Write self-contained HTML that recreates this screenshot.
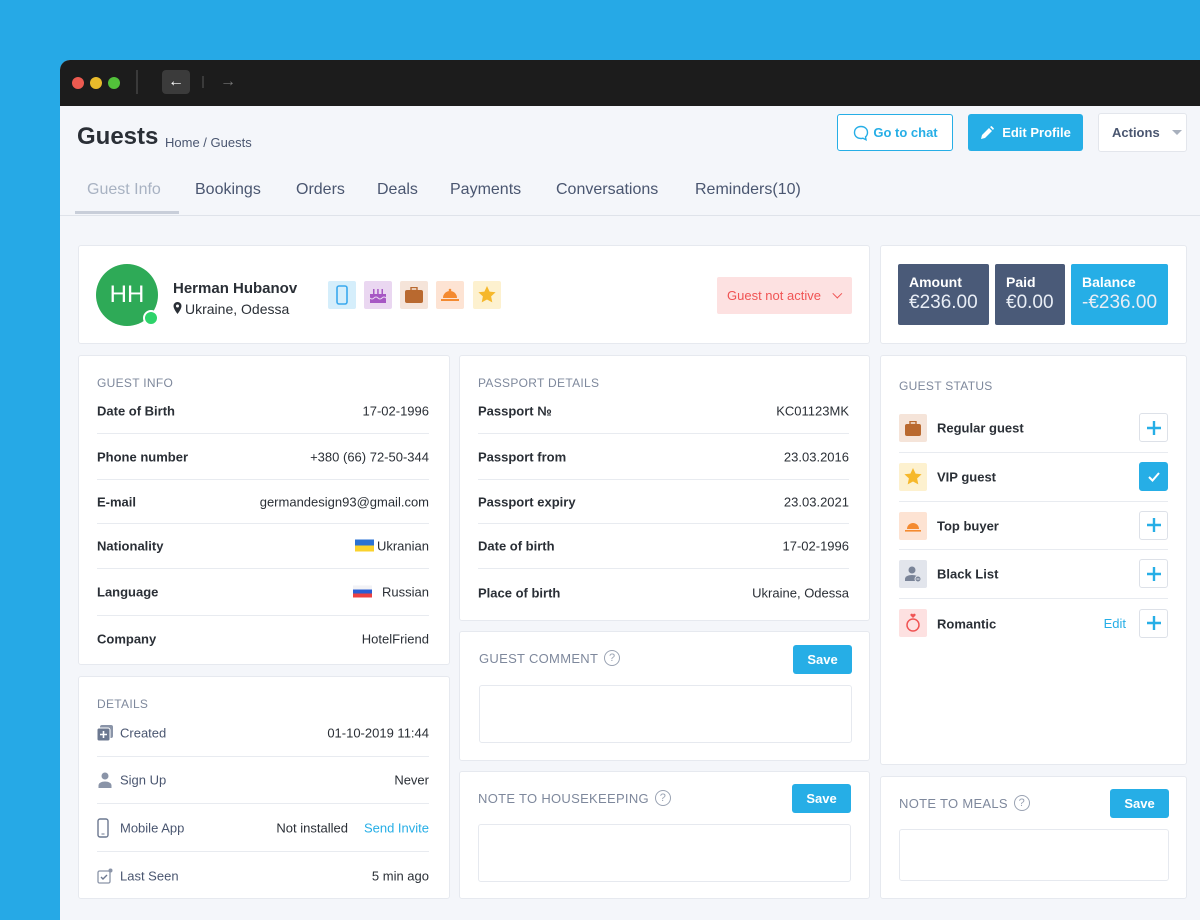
<!DOCTYPE html>
<html><head><meta charset="utf-8"><style>
*{box-sizing:border-box;margin:0;padding:0}
body{width:1200px;height:902px;overflow:hidden;background:#26a9e6;font-family:"Liberation Sans",sans-serif;color:#2a2f36;position:relative}
.a{position:absolute}
.win{left:60px;top:60px;width:1160px;height:860px;background:#f4f6fa;border-radius:10px 0 0 0;overflow:hidden}
.bar{left:0;top:0;width:1160px;height:46px;background:#1c1c1c}
.card{position:absolute;background:#fff;border:1px solid #e6e9ef;border-radius:3px}
.h{position:absolute;font-size:12px;color:#7e889c;letter-spacing:.3px;display:flex;align-items:center}
.row{position:absolute;left:18px;right:20px;height:46px;border-bottom:1px solid #e8ebf0;font-size:13px}
.row .l{position:absolute;left:0;top:50%;transform:translateY(-50%);font-weight:bold;color:#2a2f36}
.row .r{position:absolute;right:0;top:50%;transform:translateY(-50%);color:#2a2f36}
.btn{position:absolute;border-radius:3px;font-size:13px;font-weight:bold;display:flex;align-items:center;justify-content:center}
.save{position:absolute;width:59px;height:29px;background:#26aee6;color:#fff;font-size:13px;font-weight:bold;border-radius:3px;display:flex;align-items:center;justify-content:center}
.ta{position:absolute;border:1px solid #e6e9ef;border-radius:3px}
.q{display:inline-block;width:16px;height:16px;border:1px solid #9aa3b3;border-radius:50%;font-size:11px;text-align:center;line-height:14px;color:#9aa3b3;margin-left:6px}
.ic{position:absolute;width:28px;height:28px;border-radius:2px;display:flex;align-items:center;justify-content:center}
.st{position:absolute;left:18px;right:18px;height:49px;border-bottom:1px solid #e8ebf0}
.st .n{position:absolute;left:38px;top:50%;transform:translateY(-50%);font-size:13px;font-weight:bold}
.pl{position:absolute;right:0;top:50%;margin-top:-15px;width:29px;height:29px;border:1px solid #dde1e8;border-radius:3px;display:flex;align-items:center;justify-content:center}
.dl{position:absolute;left:18px;right:20px;height:47px;border-bottom:1px solid #e8ebf0;font-size:13px}
.dl .l{position:absolute;left:23px;top:50%;transform:translateY(-50%);color:#4a5670}
.dl .r{position:absolute;right:0;top:50%;transform:translateY(-50%)}
.dl svg{position:absolute;left:0;top:50%;transform:translateY(-50%)}
.tab{position:absolute;top:181px;font-size:16px;color:#4a5670}
.mb{position:absolute;top:264px;height:61px;color:#fff;padding:10px 0 0 11px;border-radius:2px}
.mb b{display:block;font-size:14px;font-weight:bold}
.mb span{display:block;font-size:19px;margin-top:2px;color:#e8edf5}
</style></head><body>
<div class="a win">
 <div class="a bar">
  <div class="a" style="left:12px;top:17px;width:12px;height:12px;border-radius:50%;background:#ec5a50"></div>
  <div class="a" style="left:30px;top:17px;width:12px;height:12px;border-radius:50%;background:#e9bb2b"></div>
  <div class="a" style="left:48px;top:17px;width:12px;height:12px;border-radius:50%;background:#52c13a"></div>
  <div class="a" style="left:76px;top:10px;width:2px;height:24px;background:#3a3a3a"></div>
  <div class="a" style="left:102px;top:10px;width:28px;height:24px;border-radius:4px;background:#3b3b3b;color:#fff;font-size:16px;text-align:center;line-height:23px;font-weight:bold">&#8592;</div>
  <div class="a" style="left:142px;top:16px;width:2px;height:12px;background:#3a3a3a"></div>
  <div class="a" style="left:160px;top:10px;color:#777;font-size:16px;line-height:23px;font-weight:bold">&#8594;</div>
 </div>
</div>
<div class="a" style="left:77px;top:123px;font-size:24px;font-weight:bold;color:#2a2f36">Guests</div>
<div class="a" style="left:165px;top:135px;font-size:13px;color:#4a5670">Home / Guests</div>
<div class="btn" style="left:837px;top:114px;width:116px;height:37px;border:1px solid #26aee6;color:#26aee6;background:#fff"><svg width="18" height="18" viewBox="0 0 18 18" style="margin-right:3px"><path d="M9 2.5c-4 0-6.5 2.6-6.5 6s2.5 6 6.5 6c.8 0 1.4-.1 2-.3l3 1.5-.5-2.8c1.3-1.1 2-2.7 2-4.4 0-3.4-2.5-6-6.5-6z" fill="none" stroke="#26aee6" stroke-width="1.4"/></svg>Go to chat</div>
<div class="btn" style="left:968px;top:114px;width:115px;height:37px;background:#26aee6;color:#fff"><svg width="14" height="14" viewBox="0 0 14 14" style="margin-right:8px"><path d="M1 13l1-4 7-7 3 3-7 7z M10 1l1.5-1 2.5 2.5-1 1.5z" fill="#fff"/></svg>Edit Profile</div>
<div class="btn" style="left:1098px;top:113px;width:89px;height:39px;background:#fff;border:1px solid #e3e6ec;color:#4a5670;justify-content:flex-start;padding-left:13px">Actions<span style="margin-left:12px;width:0;height:0;border-left:5px solid transparent;border-right:5px solid transparent;border-top:5px solid #a8b0bd"></span></div>
<div class="tab" style="left:87px;color:#a8b2c2">Guest Info</div>
<div class="a" style="left:75px;top:211px;width:104px;height:3px;background:#c8ced9"></div>
<div class="tab" style="left:195px">Bookings</div>
<div class="tab" style="left:296px">Orders</div>
<div class="tab" style="left:377px">Deals</div>
<div class="tab" style="left:450px">Payments</div>
<div class="tab" style="left:556px">Conversations</div>
<div class="tab" style="left:695px">Reminders(10)</div>
<div class="a" style="left:60px;top:215px;width:1140px;height:1px;background:#dfe3ea"></div>

<div class="card" style="left:78px;top:245px;width:792px;height:99px">
 <div class="a" style="left:17px;top:18px;width:62px;height:62px;border-radius:50%;background:#2eaa57;color:#fff;font-size:24px;text-align:center;line-height:62px">HH</div>
 <div class="a" style="left:64px;top:64px;width:16px;height:16px;border-radius:50%;background:#2ed36a;border:2px solid #fff"></div>
 <div class="a" style="left:94px;top:34px;font-size:15px;font-weight:bold;color:#2a2f36">Herman Hubanov</div>
 <div class="a" style="left:94px;top:55px;font-size:14px;color:#2a2f36"><svg width="9" height="12" viewBox="0 0 9 12" style="margin-right:3px"><path d="M4.5 0a4 4 0 0 0-4 4c0 3 4 8 4 8s4-5 4-8a4 4 0 0 0-4-4zm0 5.5a1.5 1.5 0 1 1 0-3 1.5 1.5 0 0 1 0 3z" fill="#2a2f36"/></svg>Ukraine, Odessa</div>
 <div class="ic" style="left:249px;top:35px;background:#d5eefb"><svg width="12" height="20"><rect x="1" y="1" width="10" height="18" rx="2" fill="none" stroke="#3aa9ee" stroke-width="1.6"/></svg></div>
 <div class="ic" style="left:285px;top:35px;background:#ead7f1"><svg width="20" height="18"><rect x="2" y="8" width="16" height="9" fill="#a657c4"/><rect x="5" y="3" width="1.5" height="5" fill="#a657c4"/><rect x="9.2" y="3" width="1.5" height="5" fill="#a657c4"/><rect x="13.5" y="3" width="1.5" height="5" fill="#a657c4"/><path d="M2 12q2 2 4 0t4 0 4 0 4 0" stroke="#ead7f1" fill="none"/></svg></div>
 <div class="ic" style="left:321px;top:35px;background:#f5e4d9"><svg width="20" height="16"><rect x="1" y="3" width="18" height="13" rx="2" fill="#b9692f"/><rect x="7" y="0.5" width="6" height="3" fill="none" stroke="#b9692f" stroke-width="1.4"/></svg></div>
 <div class="ic" style="left:357px;top:35px;background:#fde3d3"><svg width="20" height="16"><path d="M3 11a7 7 0 0 1 14 0z" fill="#f48a30"/><rect x="1" y="12" width="18" height="2" fill="#f48a30"/><circle cx="10" cy="3" r="1.3" fill="#f48a30"/></svg></div>
 <div class="ic" style="left:394px;top:35px;background:#fdf1cf"><svg width="20" height="20" viewBox="0 0 20 20"><path d="M10 1l2.6 5.6 6 .7-4.5 4.1 1.2 6L10 14.5l-5.3 2.9 1.2-6L1.4 7.3l6-.7z" fill="#f6b82b"/></svg></div>
 <div class="a" style="left:638px;top:31px;width:135px;height:37px;background:#fde1e1;border-radius:2px;color:#f05454;font-size:13px;padding:11px 0 0 10px">Guest not active <span style="margin-left:6px;display:inline-block;width:7px;height:7px;border-right:1.5px solid #f05454;border-bottom:1.5px solid #f05454;transform:rotate(45deg) translateY(-4px)"></span></div>
</div>
<div class="card" style="left:880px;top:245px;width:307px;height:99px"></div>
<div class="mb" style="left:898px;width:91px;background:#4a5a78"><b>Amount</b><span>€236.00</span></div>
<div class="mb" style="left:995px;width:70px;background:#4a5a78"><b>Paid</b><span>€0.00</span></div>
<div class="mb" style="left:1071px;width:97px;background:#26aee6"><b>Balance</b><span>-€236.00</span></div>

<div class="card" style="left:78px;top:355px;width:372px;height:310px">
 <div class="h" style="left:18px;top:20px">GUEST INFO</div>
 <div class="row" style="top:33px;height:45px"><span class="l">Date of Birth</span><span class="r">17-02-1996</span></div>
 <div class="row" style="top:78px"><span class="l">Phone number</span><span class="r">+380 (66) 72-50-344</span></div>
 <div class="row" style="top:124px;height:44px"><span class="l">E-mail</span><span class="r">germandesign93@gmail.com</span></div>
 <div class="row" style="top:168px;height:45px"><span class="l">Nationality</span><span class="r"><span style="display:inline-block;width:19px;height:12px;background:linear-gradient(#2a72d4 50%,#fad22d 50%);vertical-align:-1px;margin-right:3px"></span>Ukranian</span></div>
 <div class="row" style="top:213px;height:47px"><span class="l">Language</span><span class="r"><span style="display:inline-block;width:19px;height:12px;background:linear-gradient(#f2f2f5 33%,#2a5ed4 33%,#2a5ed4 66%,#ec4141 66%);vertical-align:-1px;margin-right:10px"></span>Russian</span></div>
 <div class="row" style="top:260px;border:0"><span class="l">Company</span><span class="r">HotelFriend</span></div>
</div>

<div class="card" style="left:459px;top:355px;width:411px;height:266px">
 <div class="h" style="left:18px;top:20px">PASSPORT DETAILS</div>
 <div class="row" style="top:33px;height:45px"><span class="l">Passport №</span><span class="r">KC01123MK</span></div>
 <div class="row" style="top:78px"><span class="l">Passport from</span><span class="r">23.03.2016</span></div>
 <div class="row" style="top:124px;height:44px"><span class="l">Passport expiry</span><span class="r">23.03.2021</span></div>
 <div class="row" style="top:168px;height:45px"><span class="l">Date of birth</span><span class="r">17-02-1996</span></div>
 <div class="row" style="top:213px;height:47px;border:0"><span class="l">Place of birth</span><span class="r">Ukraine, Odessa</span></div>
</div>

<div class="card" style="left:459px;top:631px;width:411px;height:130px">
 <div class="h" style="left:19px;top:18px;font-size:13px">GUEST COMMENT<span class="q">?</span></div>
 <div class="save" style="left:333px;top:13px">Save</div>
 <div class="ta" style="left:19px;top:53px;width:373px;height:58px"></div>
</div>
<div class="card" style="left:459px;top:771px;width:411px;height:128px">
 <div class="h" style="left:18px;top:18px;font-size:13px">NOTE TO HOUSEKEEPING<span class="q">?</span></div>
 <div class="save" style="left:332px;top:12px">Save</div>
 <div class="ta" style="left:18px;top:52px;width:373px;height:58px"></div>
</div>

<div class="card" style="left:78px;top:676px;width:372px;height:223px">
 <div class="h" style="left:18px;top:20px">DETAILS</div>
 <div class="dl" style="top:33px"><svg width="16" height="16"><rect x="3" y="0" width="13" height="13" rx="2" fill="#8a94a8"/><rect x="0" y="3" width="13" height="13" rx="2" fill="#6c7890" stroke="#fff"/><path d="M6.5 6v7M3 9.5h7" stroke="#fff" stroke-width="1.6"/></svg><span class="l">Created</span><span class="r">01-10-2019 11:44</span></div>
 <div class="dl" style="top:80px"><svg width="16" height="16"><circle cx="8" cy="4" r="3.5" fill="#8a94a8"/><path d="M1.5 16v-2.5c0-2.5 3-4 6.5-4s6.5 1.5 6.5 4V16z" fill="#8a94a8"/></svg><span class="l">Sign Up</span><span class="r">Never</span></div>
 <div class="dl" style="top:127px;height:48px"><svg width="12" height="20"><rect x="1" y="1" width="10" height="18" rx="2" fill="none" stroke="#6c7890" stroke-width="1.4"/><path d="M4.5 16h3" stroke="#6c7890"/></svg><span class="l">Mobile App</span><span class="r"><span style="margin-right:16px">Not installed</span><span style="color:#26aee6">Send Invite</span></span></div>
 <div class="dl" style="top:175px;border:0"><svg width="16" height="16"><rect x="1" y="3" width="12" height="12" rx="1.5" fill="none" stroke="#8a94a8" stroke-width="1.3"/><path d="M4 9l2 2 4-4" stroke="#6c7890" stroke-width="1.4" fill="none"/><circle cx="13.5" cy="2.5" r="2" fill="#8a94a8"/></svg><span class="l">Last Seen</span><span class="r">5 min ago</span></div>
</div>

<div class="card" style="left:880px;top:355px;width:307px;height:410px">
 <div class="h" style="left:18px;top:23px">GUEST STATUS</div>
 <div class="st" style="top:48px"><div class="ic" style="left:0;top:10px;background:#f5e4d9"><svg width="18" height="15"><rect x="1" y="3" width="16" height="12" rx="2" fill="#b9692f"/><rect x="6" y="0.5" width="6" height="3" fill="none" stroke="#b9692f" stroke-width="1.4"/></svg></div><span class="n">Regular guest</span><div class="pl"><svg width="16" height="16"><path d="M8 1v14M1 8h14" stroke="#26aee6" stroke-width="2.4"/></svg></div></div>
 <div class="st" style="top:97px"><div class="ic" style="left:0;top:10px;background:#fdf1cf"><svg width="20" height="20" viewBox="0 0 20 20"><path d="M10 1l2.6 5.6 6 .7-4.5 4.1 1.2 6L10 14.5l-5.3 2.9 1.2-6L1.4 7.3l6-.7z" fill="#f6b82b"/></svg></div><span class="n">VIP guest</span><div class="pl" style="background:#26aee6;border-color:#26aee6"><svg width="14" height="12"><path d="M2 6l3.5 3.5L12 2" stroke="#fff" stroke-width="2" fill="none"/></svg></div></div>
 <div class="st" style="top:146px;height:48px"><div class="ic" style="left:0;top:10px;background:#fde3d3"><svg width="18" height="14"><path d="M3 10a6 6 0 0 1 12 0z" fill="#f48a30"/><rect x="1" y="11" width="16" height="1.6" fill="#f48a30"/></svg></div><span class="n">Top buyer</span><div class="pl"><svg width="16" height="16"><path d="M8 1v14M1 8h14" stroke="#26aee6" stroke-width="2.4"/></svg></div></div>
 <div class="st" style="top:194px"><div class="ic" style="left:0;top:10px;background:#e2e5ec"><svg width="18" height="18"><circle cx="8" cy="5" r="3.5" fill="#7a8498"/><path d="M1 16v-2c0-2.5 3-4 7-4s7 1.5 7 4v2z" fill="#7a8498"/><circle cx="14" cy="14" r="3" fill="#7a8498" stroke="#e2e5ec"/><path d="M12.5 14h3" stroke="#e2e5ec"/></svg></div><span class="n">Black List</span><div class="pl"><svg width="16" height="16"><path d="M8 1v14M1 8h14" stroke="#26aee6" stroke-width="2.4"/></svg></div></div>
 <div class="st" style="top:243px;border:0"><div class="ic" style="left:0;top:10px;background:#fde1e1"><svg width="16" height="20"><circle cx="8" cy="12" r="6" fill="none" stroke="#f05454" stroke-width="1.5"/><path d="M8 5l-2.5-2.5a1.3 1.3 0 0 1 2.5-1 1.3 1.3 0 0 1 2.5 1z" fill="#f05454"/></svg></div><span class="n">Romantic</span><span style="position:absolute;right:42px;top:17px;font-size:13px;color:#26aee6">Edit</span><div class="pl"><svg width="16" height="16"><path d="M8 1v14M1 8h14" stroke="#26aee6" stroke-width="2.4"/></svg></div></div>
</div>

<div class="card" style="left:880px;top:776px;width:307px;height:123px">
 <div class="h" style="left:18px;top:18px;font-size:13px">NOTE TO MEALS<span class="q">?</span></div>
 <div class="save" style="left:229px;top:12px">Save</div>
 <div class="ta" style="left:18px;top:52px;width:270px;height:52px"></div>
</div>
</body></html>
